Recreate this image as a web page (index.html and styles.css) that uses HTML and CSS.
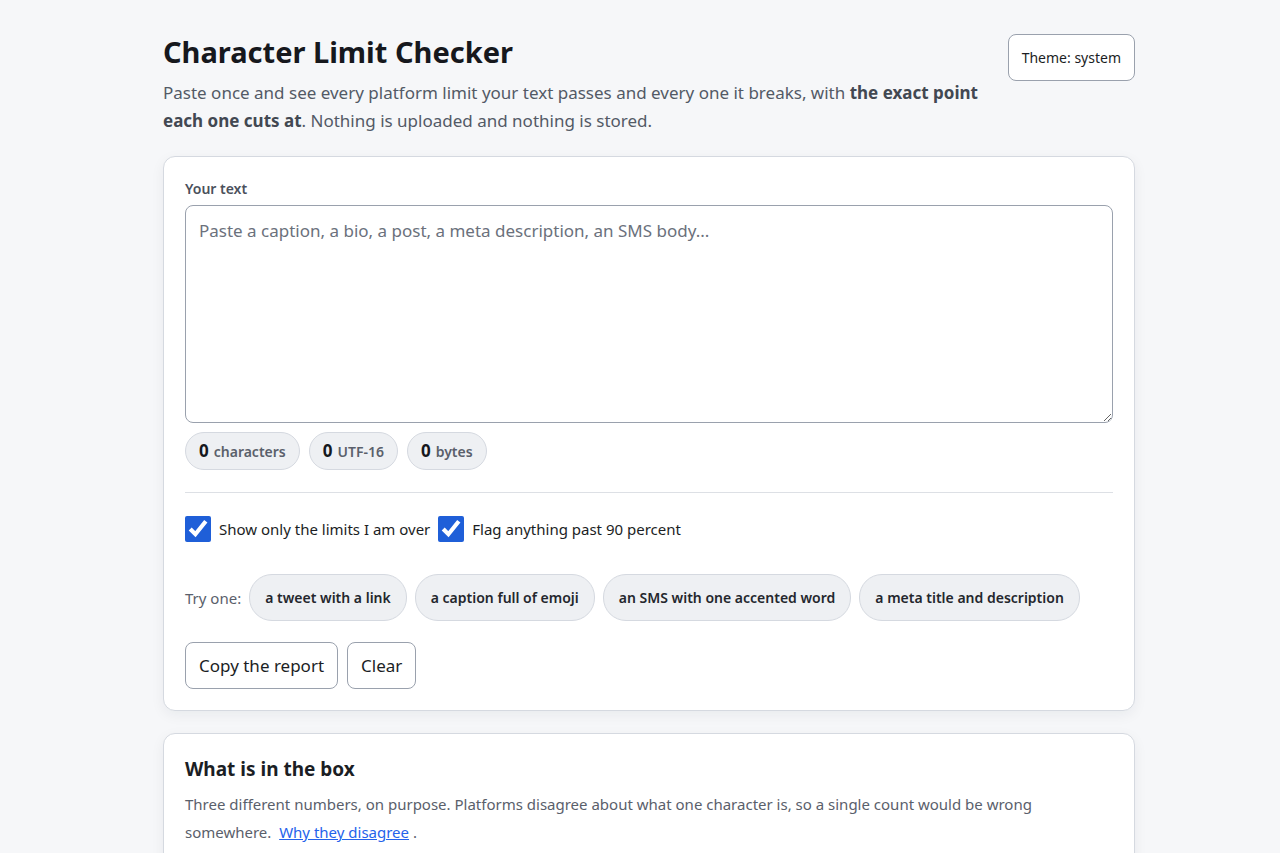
FILE: index.html
```html
<!DOCTYPE html>
<html lang="en">
<head>
    <meta charset="UTF-8">
    <meta name="viewport" content="width=device-width, initial-scale=1.0">
    <title>Character Limit Checker</title>
    <link rel="stylesheet" href="styles.css">
</head>
<body>
    <div class="page">
        <header class="top">
            <div class="intro">
                <h1>Character Limit Checker</h1>
                <p class="lead">Paste once and see every platform limit your text passes and every one it breaks, with <strong>the exact point each one cuts at</strong>. Nothing is uploaded and nothing is stored.</p>
            </div>
            <button class="theme-button">Theme: system</button>
        </header>

        <section class="card main-card">
            <label class="field-label" for="textInput">Your text</label>
            <textarea id="textInput" placeholder="Paste a caption, a bio, a post, a meta description, an SMS body..."></textarea>

            <div class="counts">
                <span class="count"><b>0</b> characters</span>
                <span class="count"><b>0</b> UTF-16</span>
                <span class="count"><b>0</b> bytes</span>
            </div>

            <hr class="divider">

            <div class="options">
                <label class="check"><input type="checkbox" checked> Show only the limits I am over</label>
                <label class="check"><input type="checkbox" checked> Flag anything past 90 percent</label>
            </div>

            <div class="samples">
                <span class="samples-label">Try one:</span>
                <button class="sample">a tweet with a link</button>
                <button class="sample">a caption full of emoji</button>
                <button class="sample">an SMS with one accented word</button>
                <button class="sample">a meta title and description</button>
            </div>

            <div class="actions">
                <button class="action">Copy the report</button>
                <button class="action">Clear</button>
            </div>
        </section>

        <section class="card info-card">
            <h2>What is in the box</h2>
            <p>Three different numbers, on purpose. Platforms disagree about what one character is, so a single count would be wrong somewhere. &nbsp;<a href="#why">Why they disagree</a> .</p>
        </section>
    </div>
</body>
</html>
```

FILE: styles.css
```css
body {
    font-family: "Noto Sans", "Open Sans", sans-serif;
    margin: 0;
    padding-left: 18px;
    background-color: #f6f7f9;
    color: #1b1e24;
}

.page {
    width: 972px;
    margin: 0 auto;
    padding-top: 33px;
}

.top {
    display: flex;
    justify-content: space-between;
    align-items: flex-start;
    margin-bottom: 21px;
}

.intro {
    max-width: 830px;
}

.top h1 {
    font-size: 29px;
    font-weight: 700;
    margin: 0;
    line-height: 38px;
    color: #16181d;
}

.lead {
    font-size: 17px;
    line-height: 28px;
    color: #535a66;
    margin: 8px 0 0;
}

.lead strong {
    color: #424852;
}

.theme-button {
    font-family: inherit;
    font-size: 14px;
    color: #1b1e24;
    background: #fff;
    border: 1px solid #9aa1ad;
    border-radius: 8px;
    padding: 0 13px;
    height: 47px;
    margin-top: 1px;
}

.card {
    background: #fff;
    border: 1px solid #d5d9e0;
    border-radius: 12px;
    box-shadow: 0 4px 14px rgba(20, 30, 50, 0.06);
    padding: 21px;
}

.field-label {
    display: block;
    font-size: 14px;
    font-weight: 600;
    color: #4b515c;
    margin-top: 1px;
    margin-bottom: 7px;
}

textarea {
    display: block;
    width: 100%;
    box-sizing: border-box;
    height: 218px;
    font-family: inherit;
    font-size: 17px;
    line-height: 26px;
    padding: 12px 13px;
    border: 1px solid #9aa1ad;
    border-radius: 8px;
    color: #1b1e24;
}

textarea::placeholder {
    color: #6b717c;
}

.counts {
    display: flex;
    gap: 9px;
    margin-top: 9px;
}

.count {
    display: inline-flex;
    align-items: baseline;
    gap: 5px;
    height: 38px;
    box-sizing: border-box;
    padding: 6px 13px 0;
    background: #eef0f3;
    border: 1px solid #d5d9e0;
    border-radius: 19px;
    font-size: 14px;
    font-weight: 600;
    color: #5a606b;
}

.count b {
    font-size: 17px;
    font-weight: 700;
    color: #16181d;
}

.divider {
    border: 0;
    border-top: 1px solid #dde0e5;
    margin: 22px 0 23px;
}

.options {
    display: flex;
    gap: 8px;
    align-items: center;
}

.check {
    display: flex;
    align-items: center;
    gap: 8px;
    font-size: 15px;
    color: #1b1e24;
}

.check input {
    width: 26px;
    height: 26px;
    margin: 0;
    accent-color: #1f5fd8;
}

.samples {
    display: flex;
    align-items: center;
    gap: 8px;
    margin-top: 32px;
}

.samples-label {
    font-size: 15px;
    color: #5a606b;
}

.sample {
    font-family: inherit;
    font-size: 14px;
    font-weight: 600;
    color: #24272d;
    background: #eef0f3;
    border: 1px solid #d5d9e0;
    border-radius: 23px;
    height: 47px;
    padding: 0 15px;
}

.actions {
    display: flex;
    gap: 9px;
    margin-top: 21px;
}

.action {
    font-family: inherit;
    font-size: 17px;
    color: #1b1e24;
    background: #fff;
    border: 1px solid #9aa1ad;
    border-radius: 8px;
    height: 47px;
    padding: 0 13px;
}

.info-card {
    margin-top: 22px;
    padding-top: 19px;
}

.info-card h2 {
    font-size: 19px;
    font-weight: 700;
    margin: 0 0 5px;
    line-height: 32px;
}

.info-card p {
    font-size: 15px;
    line-height: 28px;
    color: #5a606b;
    margin: 0;
}

.info-card a {
    color: #2563eb;
}
```
